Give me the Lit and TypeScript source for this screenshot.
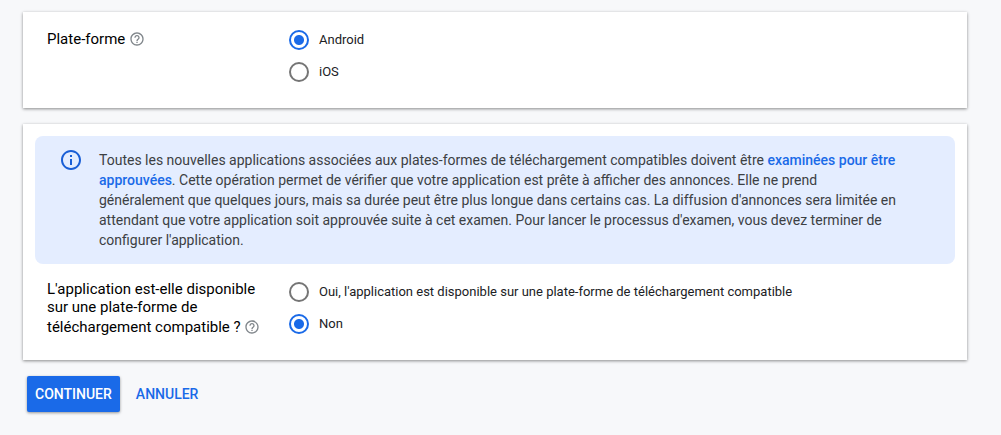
import { LitElement, html, css } from "lit";
import { customElement, property } from "lit/decorators.js";

interface Choice {
  value: string;
  label: string;
}

@customElement("help-icon")
class HelpIcon extends LitElement {
  static styles = css`
    :host {
      display: inline-block;
      vertical-align: -4px;
    }
    .button {
      display: block;
      padding: 3px 0 1px;
      border: 0;
      background: none;
      color: #80868b;
      cursor: pointer;
    }
    .glyph {
      display: block;
      width: 16px;
      height: 16px;
      fill: currentColor;
    }
  `;

  render() {
    return html`<button class="button" type="button" aria-label="Aide">
      <svg class="glyph" viewBox="0 0 24 24" aria-hidden="true">
        <path
          d="M11 18h2v-2h-2v2zm1-16C6.48 2 2 6.48 2 12s4.480 10 10 10 10-4.480 10-10S17.520 2 12 2zm0 18c-4.410 0-8-3.590-8-8s3.590-8 8-8 8 3.590 8 8-3.590 8-8 8zm0-14c-2.210 0-4 1.790-4 4h2c0-1.100.9-2 2-2s2 .9 2 2c0 2-3 1.750-3 5h2c0-2.250 3-2.500 3-5 0-2.210-1.790-4-4-4z"
        />
      </svg>
    </button>`;
  }
}

@customElement("radio-field")
class RadioField extends LitElement {
  @property() name = "";
  @property() legend = "";
  @property({ attribute: false }) choices: Choice[] = [];
  @property() value = "";

  static styles = css`
    :host {
      display: block;
    }
    .field {
      display: grid;
      grid-template-columns: 218px 1fr;
      column-gap: 24px;
      padding: 0 24px;
    }
    .legend {
      padding-top: 4px;
      font-size: 15px;
      line-height: 18px;
      color: #000;
    }
    .choice {
      display: flex;
      align-items: center;
      gap: 10px;
      height: 32px;
      font-size: 13px;
      line-height: 16px;
      color: #202124;
    }
    .radio {
      appearance: none;
      box-sizing: border-box;
      flex: none;
      width: 20px;
      height: 20px;
      margin: 0;
      border: 2px solid #757575;
      border-radius: 50%;
      background: #fff;
    }
    .radio:checked {
      border-color: #1a6ae8;
      background: radial-gradient(circle, #1a6ae8 4.5px, #fff 5.5px);
    }
  `;

  render() {
    return html`<div class="field" role="radiogroup" aria-label=${this.legend}>
      <div class="legend">${this.legend} <help-icon></help-icon></div>
      <div>
        ${this.choices.map(
          (c) => html`<label class="choice">
            <input
              class="radio"
              type="radio"
              name=${this.name}
              .value=${c.value}
              .checked=${c.value === this.value}
              @change=${() => (this.value = c.value)}
            />
            <span>${c.label}</span>
          </label>`
        )}
      </div>
    </div>`;
  }
}

@customElement("info-banner")
class InfoBanner extends LitElement {
  static styles = css`
    :host {
      display: block;
    }
    .banner {
      display: flex;
      gap: 16px;
      padding: 14px 32px 14px 24px;
      border-radius: 8px;
      background: #e4edff;
    }
    .glyph {
      flex: none;
      width: 24px;
      height: 24px;
      margin-top: -2px;
      fill: #1a5fd6;
    }
    .text {
      margin: 0;
      font-size: 14px;
      line-height: 20px;
      color: #3c4043;
    }
    .link {
      color: #1a6ae8;
      font-weight: 500;
      text-decoration: none;
    }
  `;

  render() {
    return html`<div class="banner">
      <svg class="glyph" viewBox="0 0 24 24" aria-hidden="true">
        <path
          d="M11 7h2v2h-2zm0 4h2v6h-2zm1-9C6.480 2 2 6.480 2 12s4.480 10 10 10 10-4.480 10-10S17.520 2 12 2zm0 18c-4.410 0-8-3.590-8-8s3.590-8 8-8 8 3.590 8 8-3.590 8-8 8z"
        />
      </svg>
      <p class="text">
        Toutes les nouvelles applications associées aux plates-formes de
        téléchargement compatibles doivent être
        <a class="link" href="#">examinées pour être<br />approuvées</a>. Cette
        opération permet de vérifier que votre application est prête à afficher
        des annonces. Elle ne prend<br />généralement que quelques jours, mais
        sa durée peut être plus longue dans certains cas. La diffusion
        d'annonces sera limitée en<br />attendant que votre application soit
        approuvée suite à cet examen. Pour lancer le processus d'examen, vous
        devez terminer de<br />configurer l'application.
      </p>
    </div>`;
  }
}

@customElement("app-root")
class AppRoot extends LitElement {
  static styles = css`
    :host {
      display: block;
      box-sizing: border-box;
      min-height: 100vh;
      padding: 12px 34px 20px 23px;
      background: #f7f8fa;
      font-family: Roboto, "Liberation Sans", sans-serif;
    }
    .form {
      display: grid;
      gap: 16px;
    }
    .card {
      background: #fff;
      box-shadow: 0 1px 3px rgba(0, 0, 0, 0.45);
    }
    .platform {
      padding: 12px 0 20px;
    }
    .store {
      display: grid;
      gap: 12px;
      padding: 12px 0 20px;
    }
    .notice {
      margin: 0 12px;
    }
    .actions {
      display: flex;
      gap: 8px;
      padding: 0 4px;
    }
    .button {
      height: 36px;
      padding: 0 8px;
      border: 0;
      border-radius: 2px;
      background: none;
      color: #1a6ae8;
      font: 500 14px Roboto, "Liberation Sans", sans-serif;
      text-transform: uppercase;
      cursor: pointer;
    }
    .primary {
      background: #1a6ae8;
      color: #fff;
      box-shadow: 0 1px 3px rgba(0, 0, 0, 0.4);
    }
  `;

  render() {
    return html`<form class="form" @submit=${(e: Event) => e.preventDefault()}>
      <section class="card platform">
        <radio-field
          name="platform"
          legend="Plate-forme"
          value="android"
          .choices=${[
            { value: "android", label: "Android" },
            { value: "ios", label: "iOS" },
          ]}
        ></radio-field>
      </section>
      <section class="card store">
        <info-banner class="notice"></info-banner>
        <radio-field
          name="store"
          legend="L'application est-elle disponible sur une plate-forme de téléchargement compatible&nbsp;?"
          value="no"
          .choices=${[
            {
              value: "yes",
              label:
                "Oui, l'application est disponible sur une plate-forme de téléchargement compatible",
            },
            { value: "no", label: "Non" },
          ]}
        ></radio-field>
      </section>
      <div class="actions">
        <button class="button primary" type="submit">Continuer</button>
        <button class="button" type="button">Annuler</button>
      </div>
    </form>`;
  }
}
